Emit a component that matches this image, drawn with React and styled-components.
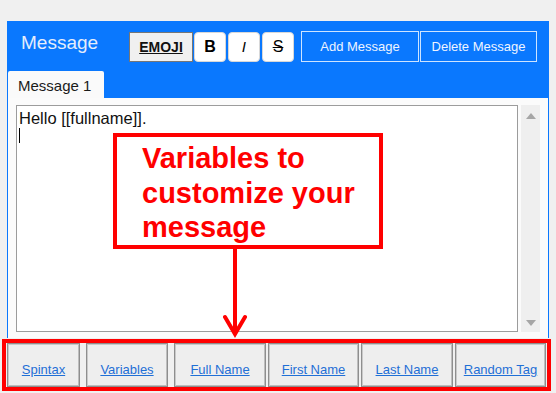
import React from "react";
import styled, { createGlobalStyle } from "styled-components";

const Global = createGlobalStyle`
  html, body { margin: 0; padding: 0; background: #f0f0f0; }
  body { font-family: "Liberation Sans", Arial, sans-serif; }
`;

const BLUE = "#0a78fe";

const Page = styled.div`
  position: relative;
  width: 556px;
  height: 393px;
  padding: 21px 0 0 7px;
  box-sizing: border-box;
  overflow: hidden;
`;

const Panel = styled.div`
  width: 542px;
  display: flex;
  flex-direction: column;
`;

const Header = styled.div`
  background: ${BLUE};
  height: 77px;
  display: flex;
  flex-direction: column;
`;

const TitleRow = styled.div`
  height: 50px;
  box-sizing: border-box;
  padding: 10px 0 0 14px;
  display: flex;
  align-items: flex-start;
`;

const Title = styled.div`
  width: 108px;
  padding-top: 1px;
  font-size: 19px;
  line-height: 22px;
  color: #e4edfc;
`;

const EmojiButton = styled.div`
  margin-top: 1px;
  width: 64px;
  height: 30px;
  box-sizing: border-box;
  background: #f0f0f0;
  border: 1px solid #767676;
  display: flex;
  align-items: center;
  justify-content: center;
  font-weight: bold;
  font-size: 14px;
  text-decoration: underline;
  color: #111;
`;

const FormatButton = styled.div`
  margin-top: 1px;
  margin-left: ${(p) => p.$gap}px;
  width: 32px;
  height: 30px;
  box-sizing: border-box;
  background: #fff;
  border: 1px solid #d8d8d8;
  border-radius: 4px;
  display: flex;
  align-items: center;
  justify-content: center;
  font-family: ${(p) => (p.$italic ? "'DejaVu Sans', sans-serif" : "inherit")};
  font-size: ${(p) => (p.$italic ? 14 : 16)}px;
  color: #000;
  font-weight: ${(p) => (p.$bold ? "bold" : "normal")};
  font-style: ${(p) => (p.$italic ? "italic" : "normal")};
  text-decoration: ${(p) => (p.$strike ? "line-through" : "none")};
`;

const ActionButton = styled.div`
  margin-left: ${(p) => p.$gap}px;
  width: ${(p) => p.$w}px;
  height: 31px;
  box-sizing: border-box;
  border: 1px solid rgba(255, 255, 255, 0.8);
  display: flex;
  align-items: center;
  justify-content: center;
  font-size: 13px;
  color: #eef4ff;
`;

const TabStrip = styled.div`
  height: 27px;
  padding-left: 1px;
  display: flex;
`;

const Tab = styled.div`
  width: 96px;
  height: 27px;
  box-sizing: border-box;
  background: #fafafa;
  border-radius: 2px 2px 0 0;
  padding: 2px 0 0 10px;
  font-size: 15px;
  line-height: 25px;
  color: #1a1a1a;
`;

const Body = styled.div`
  background: #fbfbfb;
  border-left: 1px solid ${BLUE};
  border-right: 1px solid ${BLUE};
  padding: 7px 8px 6px 8px;
  display: flex;
  gap: 3px;
`;

const Editor = styled.div`
  width: 502px;
  height: 227px;
  box-sizing: border-box;
  background: #fff;
  border: 1px solid #9c9c9c;
  padding: 3px 0 0 2px;
  font-size: 16.5px;
  line-height: 19px;
  color: #111;
`;

const Caret = styled.span`
  display: block;
  width: 1px;
  height: 15px;
  background: #000;
`;

const Scrollbar = styled.div`
  width: 19px;
  height: 227px;
  background: #efefef;
  display: flex;
  flex-direction: column;
  justify-content: space-between;
  align-items: center;
  padding: 8px 0 6px;
  box-sizing: border-box;
`;

const Arrow = styled.div`
  width: 0;
  height: 0;
  border-left: 5px solid transparent;
  border-right: 5px solid transparent;
  ${(p) => (p.$down ? "border-top: 6px solid #a6a6a6;" : "border-bottom: 6px solid #a6a6a6;")}
`;

const ButtonRow = styled.div`
  margin-top: 5px;
  display: flex;
  height: 44px;
`;

const TagButton = styled.div`
  margin-left: ${(p) => p.$gap}px;
  width: ${(p) => p.$w}px;
  height: 44px;
  box-sizing: border-box;
  background: #eeeeee;
  border: 1px solid #8e8e8e;
  box-shadow: inset 1px 1px 0 #c9c9c9, inset -1px -1px 0 #bdbdbd;
  display: flex;
  align-items: center;
  justify-content: center;
  padding-top: 9px;
`;

const TagLink = styled.span`
  font-size: 13px;
  color: #1f6fd6;
  text-decoration: underline;
`;

const Callout = styled.div`
  position: absolute;
  left: 113px;
  top: 133px;
  width: 270px;
  height: 116px;
  box-sizing: border-box;
  border: 4px solid #ff0000;
  padding: 4px 0 0 25px;
  font-weight: bold;
  font-size: 29px;
  line-height: 34.5px;
  color: #ff0000;
`;

const Highlight = styled.div`
  position: absolute;
  left: 2px;
  top: 339px;
  width: 549px;
  height: 52px;
  box-sizing: border-box;
  border: 4px solid #ff0000;
  pointer-events: none;
`;

const Pointer = styled.svg`
  position: absolute;
  left: 223px;
  top: 248px;
`;

const tags = [
  { label: "Spintax", w: 73, gap: 0 },
  { label: "Variables", w: 82, gap: 6 },
  { label: "Full Name", w: 92, gap: 6 },
  { label: "First Name", w: 91, gap: 2 },
  { label: "Last Name", w: 92, gap: 2 },
  { label: "Random Tag", w: 91, gap: 2 },
];

export default function App() {
  return (
    <Page>
      <Global />
      <Panel>
        <Header>
          <TitleRow>
            <Title>Message</Title>
            <EmojiButton>EMOJI</EmojiButton>
            <FormatButton $gap={1} $bold>B</FormatButton>
            <FormatButton $gap={2} $italic>I</FormatButton>
            <FormatButton $gap={2} $strike>S</FormatButton>
            <ActionButton $gap={7} $w={118}>Add Message</ActionButton>
            <ActionButton $gap={1} $w={117}>Delete Message</ActionButton>
          </TitleRow>
          <TabStrip>
            <Tab>Message 1</Tab>
          </TabStrip>
        </Header>
        <Body>
          <Editor>
            Hello [[fullname]].
            <Caret />
          </Editor>
          <Scrollbar>
            <Arrow />
            <Arrow $down />
          </Scrollbar>
        </Body>
      </Panel>
      <ButtonRow>
        {tags.map((t) => (
          <TagButton key={t.label} $w={t.w} $gap={t.gap}>
            <TagLink>{t.label}</TagLink>
          </TagButton>
        ))}
      </ButtonRow>
      <Callout>
        Variables to
        <br />
        customize your
        <br />
        message
      </Callout>
      <Pointer width="24" height="90" viewBox="0 0 24 90">
        <line x1="12" y1="0" x2="12" y2="86" stroke="#ff0000" strokeWidth="4" />
        <polyline points="2,69 12,86 22,69" fill="none" stroke="#ff0000" strokeWidth="4" strokeLinecap="round" />
      </Pointer>
      <Highlight />
    </Page>
  );
}
